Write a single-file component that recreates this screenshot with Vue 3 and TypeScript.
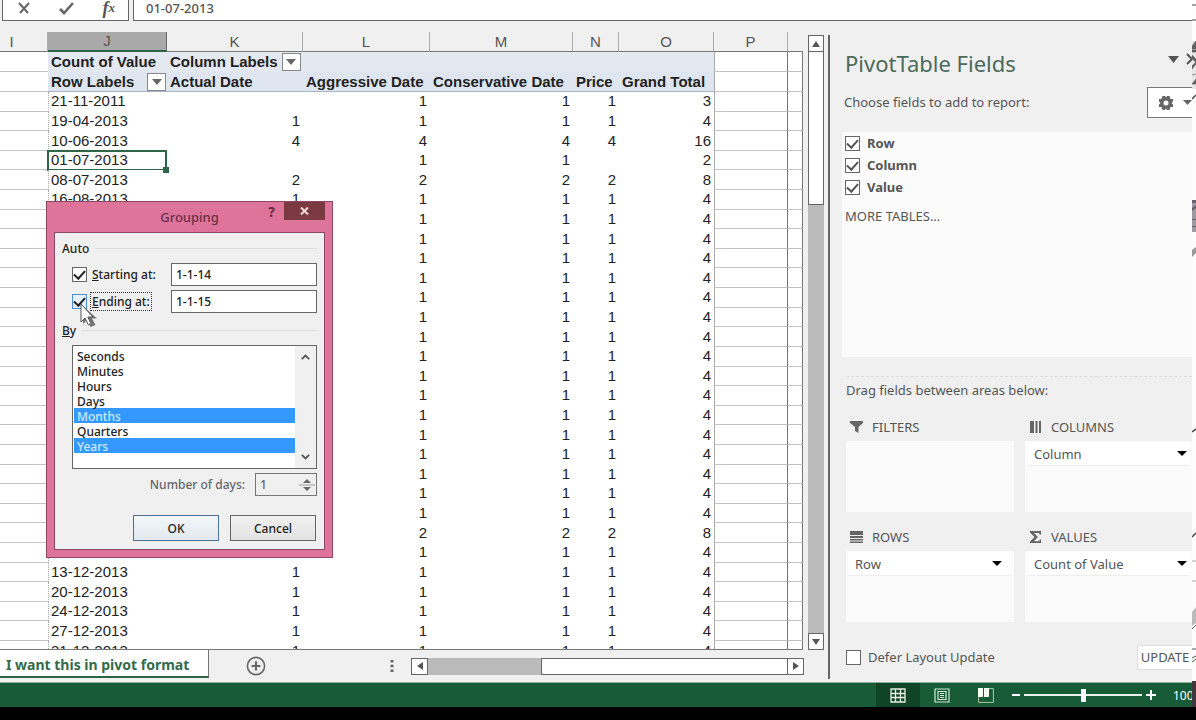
<script setup lang="ts">
import { ref } from 'vue'

type Cell = string | number

interface Row {
  label: string
  actual: Cell
  aggressive: Cell
  conservative: Cell
  price: Cell
  total: Cell
}

const row = (label: string, actual: Cell, aggressive: Cell, conservative: Cell, price: Cell, total: Cell): Row => ({
  label, actual, aggressive, conservative, price, total,
})

const ones = (label: string): Row => row(label, label ? 1 : '', 1, 1, 1, 4)

const rows: Row[] = [
  row('21-11-2011', '', 1, 1, 1, 3),
  ones('19-04-2013'),
  row('10-06-2013', 4, 4, 4, 4, 16),
  row('01-07-2013', '', 1, 1, '', 2),
  row('08-07-2013', 2, 2, 2, 2, 8),
  ones('16-08-2013'),
  ...Array.from({ length: 16 }, () => ones('')),
  row('', '', 2, 2, 2, 8),
  ones(''),
  ones('13-12-2013'),
  ones('20-12-2013'),
  ones('24-12-2013'),
  ones('27-12-2013'),
  ones('31-12-2013'),
]

const activeLabel = '01-07-2013'
const formula = ref('01-07-2013')
const startAt = ref('1-1-14')
const endAt = ref('1-1-15')
const autoStart = ref(true)
const autoEnd = ref(true)
const dayCount = ref('1')
const units = ['Seconds', 'Minutes', 'Hours', 'Days', 'Months', 'Quarters', 'Years']
const chosenUnits = ref(['Months', 'Years'])
const fields = ref([
  { name: 'Row', on: true },
  { name: 'Column', on: true },
  { name: 'Value', on: true },
])
const defer = ref(false)
const zoom = ref(50)

const areas = [
  { id: 'filters', title: 'FILTERS', field: '' },
  { id: 'columns', title: 'COLUMNS', field: 'Column' },
  { id: 'rows', title: 'ROWS', field: 'Row' },
  { id: 'values', title: 'VALUES', field: 'Count of Value' },
]
</script>

<template>
  <div class="screen">
    <div class="excel">
      <header class="formula-bar">
        <div class="formula-tools">
          <button type="button" aria-label="Cancel entry">
            <svg width="14" height="14" viewBox="0 0 14 14"><path d="M2 2l9 10M12 2L3 12" stroke="#666" stroke-width="2" fill="none" /></svg>
          </button>
          <button type="button" aria-label="Enter">
            <svg width="16" height="14" viewBox="0 0 16 14"><path d="M1 8l4 4L14 2" stroke="#666" stroke-width="2.6" fill="none" /></svg>
          </button>
          <button type="button" class="fx" aria-label="Insert function">f<small>x</small></button>
        </div>
        <input v-model="formula" class="formula-input" aria-label="Formula bar" />
      </header>

      <div class="workspace">
        <main class="sheet-area">
          <div class="sheet-row">
            <div class="sheet">
              <table>
                <colgroup>
                  <col class="w-i" /><col class="w-j" /><col class="w-k" /><col class="w-l" /><col class="w-m" />
                  <col class="w-n" /><col class="w-o" /><col class="w-p" /><col />
                </colgroup>
                <thead>
                  <tr class="letters">
                    <th class="letter-i">I</th><th class="current">J</th><th>K</th><th>L</th><th>M</th><th>N</th><th>O</th><th>P</th><th></th>
                  </tr>
                  <tr class="pivot-head">
                    <td class="grid"></td>
                    <th>Count of Value</th>
                    <th colspan="2">
                      <span class="with-filter">Column Labels
                        <button type="button" aria-label="Filter columns"><svg width="10" height="6" viewBox="0 0 10 6"><path d="M0 0h10L5 6z" fill="#666" /></svg></button>
                      </span>
                    </th>
                    <th></th><th></th><th></th>
                    <td class="grid edge"></td><td class="grid"></td>
                  </tr>
                  <tr class="pivot-head last">
                    <td class="grid"></td>
                    <th>
                      <span class="with-filter spread">Row Labels
                        <button type="button" aria-label="Filter rows"><svg width="10" height="6" viewBox="0 0 10 6"><path d="M0 0h10L5 6z" fill="#666" /></svg></button>
                      </span>
                    </th>
                    <th>Actual Date</th><th>Aggressive Date</th><th>Conservative Date</th><th>Price</th><th>Grand Total</th>
                    <td class="grid edge"></td><td class="grid"></td>
                  </tr>
                </thead>
                <tbody>
                  <tr v-for="(r, i) in rows" :key="i">
                    <td class="grid"></td>
                    <td class="label" :class="{ active: r.label === activeLabel }">{{ r.label }}</td>
                    <td>{{ r.actual }}</td>
                    <td>{{ r.aggressive }}</td>
                    <td>{{ r.conservative }}</td>
                    <td>{{ r.price }}</td>
                    <td>{{ r.total }}</td>
                    <td class="grid edge"></td>
                    <td class="grid"></td>
                  </tr>
                </tbody>
              </table>
            </div>
            <div class="vscroll">
              <button type="button" aria-label="Scroll up"><svg width="8" height="6" viewBox="0 0 8 6"><path d="M0 6h8L4 0z" fill="#555" /></svg></button>
              <div class="vthumb"></div>
              <div class="track"></div>
              <button type="button" aria-label="Scroll down"><svg width="8" height="6" viewBox="0 0 8 6"><path d="M0 0h8L4 6z" fill="#555" /></svg></button>
            </div>
          </div>

          <nav class="tabs">
            <button type="button" class="tab">I want this in pivot format</button>
            <button type="button" class="add" aria-label="New sheet">
              <svg width="20" height="20" viewBox="0 0 20 20"><circle cx="10" cy="10" r="8.6" fill="none" stroke="#666" stroke-width="1.6" /><path d="M10 5.5v9M5.5 10h9" stroke="#666" stroke-width="2.2" /></svg>
            </button>
            <svg class="dots" width="4" height="14" viewBox="0 0 4 14"><path d="M.5 1h3v2.5h-3zM.5 5.7h3v2.5h-3zM.5 10.4h3v2.5h-3z" fill="#666" /></svg>
            <div class="hscroll">
              <button type="button" aria-label="Scroll left"><svg width="6" height="8" viewBox="0 0 6 8"><path d="M6 0v8L0 4z" fill="#555" /></svg></button>
              <div class="htrack"></div>
              <div class="hthumb"></div>
              <button type="button" aria-label="Scroll right"><svg width="6" height="8" viewBox="0 0 6 8"><path d="M0 0v8l6-4z" fill="#555" /></svg></button>
            </div>
          </nav>

          <section class="dialog" role="dialog" aria-labelledby="dialog-title">
            <header class="dialog-head">
              <h2 id="dialog-title">Grouping</h2>
              <div class="dialog-actions">
                <button type="button" class="help" aria-label="Help">?</button>
                <button type="button" class="close" aria-label="Close"><svg width="9" height="8" viewBox="0 0 9 8"><path d="M1 .5l7 7M8 .5l-7 7" stroke="#f6dcd8" stroke-width="2" /></svg></button>
              </div>
            </header>
            <form class="dialog-body" @submit.prevent>
              <div class="group-title"><span>Auto</span></div>
              <div class="auto-row">
                <input id="auto-start" v-model="autoStart" type="checkbox" class="tick dark" />
                <label for="auto-start"><u>S</u>tarting at:</label>
                <input v-model="startAt" type="text" aria-label="Starting at" />
              </div>
              <div class="auto-row">
                <input id="auto-end" v-model="autoEnd" type="checkbox" class="tick dark hot" />
                <label for="auto-end" class="focus"><u>E</u>nding at:</label>
                <input v-model="endAt" type="text" aria-label="Ending at" />
              </div>
              <div class="group-title by"><label for="units"><u>B</u>y</label></div>
              <div class="listbox">
                <select id="units" v-model="chosenUnits" multiple size="7">
                  <option v-for="u in units" :key="u" :value="u">{{ u }}</option>
                </select>
                <div class="list-arrows">
                  <svg width="9" height="6" viewBox="0 0 9 6"><path d="M.8 5.2L4.5 1.5l3.7 3.7" fill="none" stroke="#555" stroke-width="1.8" /></svg>
                  <svg width="9" height="6" viewBox="0 0 9 6"><path d="M.8 .8l3.7 3.7L8.200 .8" fill="none" stroke="#555" stroke-width="1.8" /></svg>
                </div>
              </div>
              <div class="days">
                <label for="days">Number of days:</label>
                <div class="spinner">
                  <input id="days" v-model="dayCount" type="text" disabled />
                  <svg width="18" height="20" viewBox="0 0 18 20"><path d="M9 4l4 4H5zM5 12h8l-4 4z" fill="#666" /><path d="M1 10h16" stroke="#999" /></svg>
                </div>
              </div>
              <div class="buttons">
                <button type="submit" class="default">OK</button>
                <button type="button">Cancel</button>
              </div>
            </form>
            <svg class="pointer" width="18" height="26" viewBox="0 0 18 26">
              <path d="M3 3v18l4-4 3.500 7 5-2-3.500-6.500H17z" fill="#555" opacity=".8" />
              <path d="M1 1v18l4-4 3.500 7 2.500-1.300L7.800 14H13z" fill="#fff" stroke="#555" stroke-width="1" />
            </svg>
          </section>
        </main>

        <aside class="pane">
          <div class="pane-head">
            <h1>PivotTable Fields</h1>
            <svg class="pane-menu" width="11" height="7" viewBox="0 0 11 7"><path d="M0 0h11L5.500 7z" fill="#555" /></svg>
            <svg class="pane-close" width="6" height="12" viewBox="0 0 6 12"><path d="M1 1l10 10M1 11L11 1" stroke="#555" stroke-width="2" /></svg>
          </div>
          <div class="choose">
            <p>Choose fields to add to report:</p>
            <button type="button" class="gear" aria-label="Tools">
              <svg width="16" height="16" viewBox="0 0 16 16">
                <path d="M4.500 1h2.500l1 1.500L9 1h2.500l1 3H15v2.500L13.500 8 15 9.500V12h-2.500l-1 3H9l-1-1.500L7 15H4.500l-1-3H1V9.500L2.500 8 1 6.500V4h2.500z" fill="#666" /><circle cx="8" cy="8" r="2.500" fill="#fff" />
              </svg>
              <svg width="9" height="6" viewBox="0 0 9 6"><path d="M0 0h9L4.500 5z" fill="#666" /></svg>
            </button>
          </div>
          <div class="field-list">
            <label v-for="f in fields" :key="f.name"><input v-model="f.on" type="checkbox" class="tick" />{{ f.name }}</label>
            <a href="#more">MORE TABLES...</a>
          </div>
          <p class="drag">Drag fields between areas below:</p>
          <div class="areas">
            <section v-for="a in areas" :key="a.id">
              <h3>
                <svg width="14" height="14" viewBox="0 0 14 14" fill="#666">
                  <path v-if="a.id === 'filters'" d="M0 1h13v2L8.500 7v6L5 11V7L0 3z" />
                  <path v-else-if="a.id === 'columns'" d="M1 1h4v12H1zM6.500 1h2v12h-2zM10 1h2v12h-2z" />
                  <path v-else-if="a.id === 'rows'" d="M0 1h13v4H0zM0 6h13v2H0zM0 9h13v1.500H0zM0 11.500h13V13H0z" />
                  <path v-else d="M1 1h11v3.500h-1.500L10 3H5l4 4-4 4.200h5.200l.6-1.800H12V13H1v-1.400L5.500 7 1 2.500z" />
                </svg>
                {{ a.title }}
              </h3>
              <div class="drop">
                <button v-if="a.field" type="button">
                  {{ a.field }}
                  <svg width="10" height="5" viewBox="0 0 10 5"><path d="M0 0h10L5 5z" fill="#000" /></svg>
                </button>
              </div>
            </section>
          </div>
          <div class="pane-foot">
            <label><input v-model="defer" type="checkbox" class="tick" />Defer Layout Update</label>
            <button type="button">UPDATE</button>
          </div>
        </aside>
      </div>

      <footer class="status">
        <button type="button" class="view on" aria-label="Normal view">
          <svg width="16" height="15" viewBox="0 0 16 15"><path d="M1 1h14v13H1zM5.500 1v13M10.500 1v13M1 5.500h14M1 9.500h14" fill="none" stroke="#e6f0e6" stroke-width="1.300" /></svg>
        </button>
        <button type="button" class="view" aria-label="Page layout view">
          <svg width="16" height="15" viewBox="0 0 16 15"><path d="M1 1h14v13H1zM4 3.500h8v8H4zM6 5.500h4M6 7.500h4M6 9.500h4" fill="none" stroke="#d5e6d5" stroke-width="1.200" /></svg>
        </button>
        <button type="button" class="view" aria-label="Page break view">
          <svg width="16" height="15" viewBox="0 0 16 15"><path d="M0 0h5v9H0zM6 0h5v9H6z" fill="#f4fbf0" /><path d="M11 .6h4.400v13.800H.6V9" fill="none" stroke="#a9c8a9" /></svg>
        </button>
        <div class="zoom">
          <button type="button" aria-label="Zoom out"><svg width="8" height="10" viewBox="0 0 8 10"><path d="M0 5h8" stroke="#fff" stroke-width="2" /></svg></button>
          <input v-model="zoom" type="range" min="0" max="100" aria-label="Zoom" />
          <button type="button" aria-label="Zoom in"><svg width="10" height="10" viewBox="0 0 10 10"><path d="M0 5h10M5 0v10" stroke="#fff" stroke-width="2" /></svg></button>
        </div>
        <span class="percent">100</span>
      </footer>
    </div>

    <svg class="sliver" width="4" height="720" viewBox="0 0 4 720">
      <path d="M0 0h4v683H0z" fill="#fdfdfd" />
      <path d="M0 41h4v48H0z" fill="#e6e6e6" />
      <path d="M0 5h4M0 20h4" stroke="#444" />
      <path d="M0 46l4-5v8H0zM0 50h4v2H0zM0 55l4 4v3L0 59zM0 66l4-4v2l-4 5zM0 75l4-1M0 84l4-5v5H0z" fill="#666" stroke="#555" stroke-width=".6" />
      <path d="M0 99l4-4" stroke="#444" stroke-width="1.500" />
      <path d="M0 200h4v32H0z" fill="#9c99a3" />
      <path d="M0 200h4v3H0zM0 208l4-3v3l-4 3zM0 219h4v1H0zM0 226h4v1H0z" fill="#66626f" />
      <path d="M0 250l4-3v6l-4 4z" fill="#999" />
      <path d="M0 432l4-3M0 537l4-4" stroke="#444" stroke-width="1.500" />
      <path d="M0 561h4M0 581h4" stroke="#aaa" />
      <path d="M0 612l4-5v16l-4 3z" fill="#bbb" />
      <path d="M0 629l4-4M0 649h4M0 658l4-2M0 662l4-3" stroke="#555" />
      <path d="M0 681h4v26H0z" fill="#41373d" />
    </svg>
  </div>
</template>

<style>
body {
  background: #000;
}
</style>

<style scoped>
* {
  box-sizing: border-box;
}
.screen {
  display: flex;
  min-height: 100vh;
  overflow: hidden;
  background: #000;
  font-family: "Noto Sans", "Open Sans", sans-serif;
  font-size: 13px;
  color: #555;
}
.sliver {
  flex: none;
}
.excel {
  flex: 1;
  min-width: 0;
  display: flex;
  flex-direction: column;
  padding-bottom: 13px;
}
button {
  font: inherit;
  color: inherit;
  padding: 0;
  border: 0;
  background: none;
  display: flex;
  align-items: center;
  justify-content: center;
}
input {
  font: inherit;
  color: inherit;
  margin: 0;
}
h1, h2, h3, p {
  margin: 0;
  font-weight: inherit;
}

/* formula bar */
.formula-bar {
  display: flex;
  height: 21px;
  gap: 4px;
  padding-left: 2px;
  background: #f0f0f0;
}
.formula-tools {
  display: flex;
  align-items: center;
  justify-content: space-between;
  width: 127px;
  padding: 0 13px 4px 14px;
  background: #fff;
  border: 1px solid #666;
  border-top: 0;
}
.fx {
  font: italic bold 18px/16px "Liberation Serif", serif;
  color: #555;
}
.fx small {
  font-size: 13px;
}
.formula-input {
  flex: 1;
  border: 1px solid #666;
  border-top: 0;
  border-right: 0;
  padding: 0 12px 4px;
  background: #fff;
  font-weight: 500;
}

/* layout */
.workspace {
  flex: 1;
  display: flex;
  min-height: 0;
  background: #f0f0f0;
}
.sheet-area {
  position: relative;
  flex: 1;
  min-width: 0;
  display: flex;
  flex-direction: column;
}
.sheet-row {
  flex: 1 1 0;
  min-height: 0;
  display: flex;
  gap: 5px;
  padding-right: 4px;
}
.sheet {
  flex: 1;
  min-width: 0;
  overflow: hidden;
  padding-top: 11px;
  border-bottom: 1px solid #777;
}

/* worksheet */
table {
  width: 100%;
  height: 629px;
  table-layout: fixed;
  border-collapse: separate;
  border-spacing: 0;
  font-family: "Liberation Sans", Arial, sans-serif;
  font-size: 15px;
  line-height: 18px;
  color: #222;
}
.w-i { width: 48px; }
.w-j { width: 119px; }
.w-k { width: 136px; }
.w-l { width: 127px; }
.w-m { width: 143px; }
.w-n { width: 46px; }
.w-o { width: 95px; }
.w-p { width: 74px; }
th, td {
  padding: 0;
  white-space: nowrap;
}
.letters th {
  height: 20px;
  font-weight: normal;
  color: #555;
  background: #f0f0f0;
  border-right: 1px solid #aaa;
  border-bottom: 1px solid #777;
}
.letters .letter-i {
  padding-right: 24px;
}
.letters th:last-child {
  border-right: 0;
}
.letters .current {
  background: #a9a9a9;
  border-bottom: 2px solid #2b6546;
  border-right-color: #666;
}
.pivot-head th {
  height: 20px;
  background: #e4e8f0;
  color: #222;
  text-align: left;
  padding-left: 3px;
}
.pivot-head.last th {
  background: #dfe6ef;
  border-bottom: 1px solid #a6b3c4;
}
.with-filter {
  display: flex;
  align-items: center;
  gap: 4px;
}
.spread {
  justify-content: space-between;
  padding-right: 1px;
}
.with-filter button {
  width: 19px;
  height: 18px;
  background: #fff;
  border: 1px solid #888;
}
tbody td {
  background: #fff;
  text-align: right;
  padding: 0 3px 1px 0;
}
tbody .label {
  position: relative;
  text-align: left;
  padding-left: 2px;
  border-left: 1px dotted #aaa;
}
.active::after {
  content: "";
  position: absolute;
  inset: -1px 0 -1px -2px;
  border: 2px solid #2f6648;
}
.active::before {
  content: "";
  position: absolute;
  right: -2px;
  bottom: -3px;
  width: 6px;
  height: 6px;
  background: #2f6648;
  z-index: 1;
}
.grid {
  background: #fff;
  border-bottom: 1px solid #c4c4c4;
}
td.edge {
  border-left: 1px solid #aaa;
  border-right: 1px solid #777;
}
.grid:last-child {
  border-right: 1px solid #777;
}

/* scroll bars */
.vscroll {
  width: 16px;
  display: flex;
  flex-direction: column;
  padding-top: 14px;
}
.vscroll button {
  height: 17px;
  background: #fff;
  border: 1px solid #666;
}
.vthumb {
  height: 153px;
  background: #fff;
  border: 1px solid #666;
  border-top: 0;
}
.track {
  flex: 1;
  background: #bababa;
}
.tabs {
  display: flex;
  align-items: center;
  height: 32px;
  padding-right: 24px;
}
.tab {
  align-self: flex-start;
  height: 28px;
  padding: 2px 19px 0 6px;
  background: #fff;
  color: #336b4b;
  font-size: 14px;
  font-weight: bold;
  border-right: 1px solid #777;
  border-bottom: 2px solid #2b6546;
}
.add {
  margin-left: 37px;
}
.dots {
  margin-left: auto;
}
.hscroll {
  display: flex;
  width: 393px;
  height: 17px;
  margin-left: 17px;
}
.hscroll button {
  width: 17px;
  background: #fff;
  border: 1px solid #666;
}
.htrack {
  flex: 113;
  background: #bababa;
}
.hthumb {
  flex: 246;
  background: #fff;
  border: 1px solid #666;
  border-right: 0;
}

/* tick boxes */
.tick {
  appearance: none;
  flex: none;
  width: 15px;
  height: 15px;
  background: #fff;
  border: 1px solid #666;
  display: grid;
  place-items: center;
}
.tick:checked::before {
  content: "";
  width: 5px;
  height: 9px;
  margin-bottom: 3px;
  border: solid #555;
  border-width: 0 2px 2px 0;
  rotate: 42deg;
}
.tick.dark:checked::before {
  border-color: #222;
}
.tick.hot {
  border-color: #4a90d0;
  background: #e4f1fc;
}

/* dialog */
.dialog {
  position: absolute;
  left: 46px;
  top: 180px;
  width: 287px;
  padding: 0 7px 7px;
  background: #de7499;
  border: 1px solid #8d4663;
  font-size: 12px;
  font-weight: 500;
  line-height: 15px;
  color: #222;
}
.dialog-head {
  position: relative;
  display: flex;
  justify-content: center;
  height: 30px;
  padding-top: 6px;
}
.dialog-head h2 {
  font-size: 13px;
  line-height: 18px;
  color: #6b3049;
}
.dialog-actions {
  position: absolute;
  top: 0;
  right: 0;
  display: flex;
  gap: 9px;
}
.help {
  font-size: 14px;
  font-weight: bold;
  color: #6b2944;
}
.close {
  width: 41px;
  height: 18px;
  background: #7a3a40;
}
.dialog-body {
  display: flex;
  flex-direction: column;
  padding: 8px 7px;
  background: #f0f0f0;
  border: 1px solid #8d4663;
}
.group-title {
  display: flex;
  align-items: center;
  gap: 6px;
  margin-bottom: 7px;
}
.group-title::after {
  content: "";
  flex: 1;
  border-top: 1px solid #ddd;
}
.by {
  margin: 6px 0 7px;
}
.auto-row {
  display: flex;
  align-items: center;
  height: 23px;
  margin-bottom: 4px;
  padding-left: 10px;
}
.auto-row label {
  margin-left: 4px;
  padding: 1px;
}
.auto-row .focus {
  outline: 1px dotted #333;
}
.auto-row input[type="text"] {
  width: 146px;
  height: 23px;
  margin-left: auto;
  padding: 0 4px;
  border: 1px solid #666;
  background: #fff;
}
.listbox {
  display: flex;
  height: 124px;
  margin-left: 10px;
  border: 1px solid #666;
  background: #fff;
}
select {
  flex: 1;
  height: 120px;
  padding: 2px 0 0 1px;
  margin: 0;
  border: 0;
  outline: 0;
  border-radius: 0;
  overflow: hidden;
  background: #fff;
  font: inherit;
  color: #222;
}
option {
  min-height: 15px;
  height: 15px;
  padding: 0 0 0 3px;
  font-weight: 500;
  line-height: 15px;
}
option:checked {
  background: #3399fe linear-gradient(#3399fe, #3399fe);
  color: #cfe8ff;
  -webkit-text-fill-color: #cfe8ff;
}
.list-arrows {
  width: 21px;
  display: flex;
  flex-direction: column;
  align-items: center;
  justify-content: space-between;
  padding: 8px 0;
  background: #f0f0f0;
}
.days {
  display: flex;
  align-items: center;
  justify-content: flex-end;
  gap: 10px;
  margin-top: 4px;
  color: #666;
}
.spinner {
  display: flex;
  align-items: center;
  width: 62px;
  height: 23px;
  border: 1px solid #777;
}
.spinner input {
  flex: 1;
  min-width: 0;
  padding: 0 4px;
  border: 0;
  background: transparent;
}
.buttons {
  display: flex;
  justify-content: flex-end;
  gap: 11px;
  margin: 19px 1px 0 0;
}
.buttons button {
  width: 86px;
  height: 26px;
  border: 1px solid #666;
  background: linear-gradient(#f1f1f1, #e3e3e3);
}
.buttons .default {
  border-color: #4b7397;
  background: linear-gradient(#f2f6fa, #e2e9f0);
}
.pointer {
  position: absolute;
  left: 33px;
  top: 101px;
}

/* field pane */
.pane {
  width: 364px;
  flex: none;
  display: flex;
  flex-direction: column;
  margin: 14px 0 3px;
  padding-left: 12px;
  border-left: 2px solid #666;
}
.pane-head {
  display: flex;
  align-items: center;
  height: 55px;
  padding-left: 3px;
}
h1 {
  font-size: 22px;
  line-height: 30px;
  color: #4c6a5a;
}
.pane-menu {
  margin: 0 7px 7px auto;
}
.pane-close {
  margin-bottom: 7px;
}
.choose {
  display: flex;
  justify-content: space-between;
  align-items: flex-start;
  height: 42px;
  padding-left: 2px;
}
.choose p {
  line-height: 24px;
}
.gear {
  width: 45px;
  height: 31px;
  margin-top: -3px;
  gap: 9px;
  padding-left: 9px;
  background: #fff;
  border: 1px solid #777;
  border-right: 0;
}
.field-list {
  display: flex;
  flex-direction: column;
  height: 225px;
  padding-left: 3px;
  background: #fbfbfb;
}
.field-list label {
  display: flex;
  align-items: center;
  gap: 7px;
  height: 22px;
  font-weight: bold;
}
.field-list a {
  margin-top: 8px;
  color: #555;
  text-decoration: none;
  line-height: 20px;
}
.drag {
  margin: 19px 0 0 4px;
  padding-top: 3px;
  line-height: 20px;
  border-top: 1px dashed #ddd;
}
.areas {
  display: grid;
  grid-template-columns: 168px 1fr;
  column-gap: 11px;
  padding-left: 4px;
  margin-top: 15px;
}
.areas section {
  height: 110px;
}
h3 {
  display: flex;
  align-items: center;
  gap: 8px;
  height: 26px;
  padding: 0 0 3px 4px;
  font-size: 13px;
}
.drop {
  height: 71px;
  padding: 1px 2px;
  background: #fbfbfb;
}
.drop button {
  width: 100%;
  height: 24px;
  justify-content: space-between;
  padding: 0 3px 0 7px;
  background: #fff;
  border-bottom: 1px solid #eee;
}
.areas section:nth-child(3) .drop button {
  padding-right: 10px;
}
.pane-foot {
  display: flex;
  align-items: center;
  justify-content: space-between;
  height: 26px;
  margin-top: 9px;
  padding-left: 4px;
}
.pane-foot label {
  display: flex;
  align-items: center;
  gap: 7px;
}
.pane-foot button {
  width: 55px;
  height: 25px;
  background: #fff;
  border: 1px solid #ddd;
  border-right: 0;
}

/* status bar */
.status {
  display: flex;
  align-items: center;
  justify-content: flex-end;
  height: 25px;
  background: #185c37;
  border-top: 1px solid #8fb09c;
  color: #fff;
}
.view {
  width: 44px;
  height: 24px;
}
.view.on {
  background: #104426;
}
.zoom {
  display: flex;
  align-items: center;
  gap: 4px;
  margin-left: 4px;
}
.zoom input {
  appearance: none;
  width: 118px;
  height: 13px;
  background: linear-gradient(#e8f3ea, #e8f3ea) center / 100% 2px no-repeat;
}
.zoom input::-webkit-slider-thumb {
  appearance: none;
  width: 5px;
  height: 13px;
  background: #fff;
}
.percent {
  width: 19px;
  margin-left: 17px;
  font-size: 12px;
  overflow: hidden;
}
</style>
